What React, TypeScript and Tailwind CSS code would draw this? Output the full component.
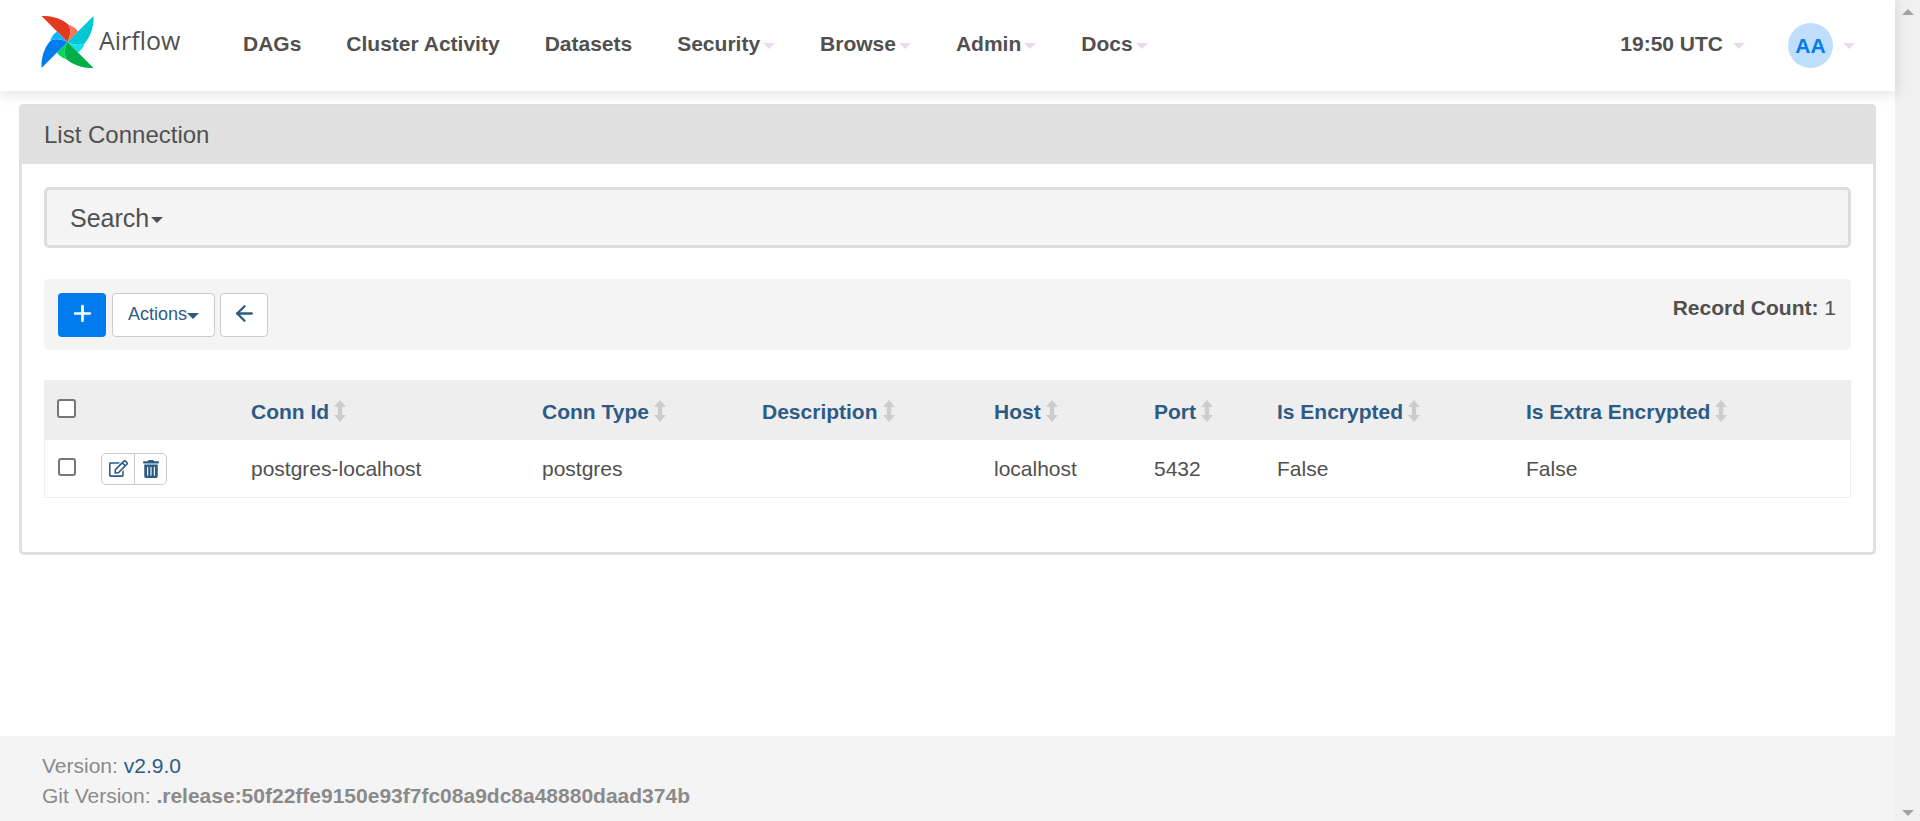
import { ArrowLeft, Plus } from 'lucide-react'
import { FaRegEdit, FaTrashAlt } from 'react-icons/fa'

const navItems = [
  { label: 'DAGs' },
  { label: 'Cluster Activity' },
  { label: 'Datasets' },
  { label: 'Security', caret: true },
  { label: 'Browse', caret: true },
  { label: 'Admin', caret: true },
  { label: 'Docs', caret: true },
]

const columns = [
  { label: 'Conn Id', value: 'postgres-localhost', width: 'w-[291px]' },
  { label: 'Conn Type', value: 'postgres', width: 'w-[220px]' },
  { label: 'Description', value: '', width: 'w-[232px]' },
  { label: 'Host', value: 'localhost', width: 'w-[160px]' },
  { label: 'Port', value: '5432', width: 'w-[123px]' },
  { label: 'Is Encrypted', value: 'False', width: 'w-[249px]' },
  { label: 'Is Extra Encrypted', value: 'False', width: 'flex-1' },
]

const blades = [
  { angle: 0, dark: '#e43921', light: '#ff7557' },
  { angle: 90, dark: '#00c7d4', light: '#11e1ee' },
  { angle: 180, dark: '#00ad46', light: '#04d659' },
  { angle: 270, dark: '#017cee', light: '#0cb6ff' },
]

function Caret({ className }: { className: string }) {
  return <span className={`inline-block border-x-[6px] border-t-[6px] border-x-transparent ${className}`} />
}

function Logo() {
  return (
    <svg width="53" height="52" viewBox="0 0 54 54" className="shrink-0">
      {blades.map((b) => (
        <g key={b.angle} transform={`rotate(${b.angle} 27 27)`}>
          <path d="M0 0C9 -0.5 20 2 28 9C31 14 30 21 27 27Z" fill={b.dark} />
          <path d="M28 9C32 10 36 13 38 16L27 27C30 21 31 14 28 9Z" fill={b.light} />
        </g>
      ))}
    </svg>
  )
}

function SortIcon() {
  return (
    <svg width="12" height="22" viewBox="0 0 12 22" className="ml-[5px] mt-[-3px] shrink-0 text-[#cccccc]">
      <path d="M6 0L12 7H8.2V15H12L6 22L0 15H3.8V7H0Z" fill="currentColor" />
    </svg>
  )
}

export default function App() {
  return (
    <div className="flex h-[821px] overflow-hidden bg-white font-['Liberation_Sans',Arial,sans-serif] text-[#51504f]">
      <div className="flex min-w-0 flex-1 flex-col">
        <header className="relative z-10 flex h-[91px] shrink-0 items-center bg-white shadow-[0_2px_14px_rgba(0,0,0,0.14)]">
          <div className="mb-[8px] ml-[41px] flex w-[202px] shrink-0 items-center">
            <Logo />
            <span className="mb-[2px] ml-[5px] font-['Open_Sans',sans-serif] text-[25px] leading-none">Airflow</span>
          </div>
          <nav className="mb-[4px] flex items-center gap-[45px]">
            {navItems.map((item) => (
              <span key={item.label} className="flex items-center text-[21px] font-bold">
                {item.label}
                {item.caret && <Caret className="ml-[3px] mt-[4px] border-t-[#e8dcec]" />}
              </span>
            ))}
          </nav>
          <div className="ml-auto flex items-center">
            <span className="mb-[4px] text-[21px] font-bold">19:50 UTC</span>
            <Caret className="ml-[10px] border-t-[#e8dcec]" />
            <span className="ml-[43px] flex h-[45px] w-[45px] items-center justify-center rounded-full bg-[#bfdefc] text-[21px] font-bold text-[#017cee]">AA</span>
            <Caret className="ml-[10px] mr-[40px] border-t-[#e8dcec]" />
          </div>
        </header>

        <main className="flex-1 px-[19px] pt-[13px]">
          <section className="rounded-[5px] border-[3px] border-t-0 border-[#e0e0e0] pb-[54px]">
            <div className="-mx-[3px] flex h-[60px] items-center rounded-t-[5px] bg-[#e0e0e0] px-[25px] pt-[2px] text-[24px]">List Connection</div>
            <div className="px-[22px] pt-[23px]">
              <div className="flex h-[61px] items-center rounded-[5px] border-[3px] border-[#dddddd] bg-[#f4f4f4] px-[23px] pt-[2px] text-[25px]">
                Search
                <Caret className="ml-[2px] mt-[3px] border-t-[#51504f]" />
              </div>

              <div className="mt-[31px] flex h-[71px] items-start justify-between rounded-[5px] bg-[#f4f4f4] pl-[14px] pr-[15px] pt-[14px]">
                <div className="flex gap-[5px]">
                  <button className="flex h-[44px] w-[48px] items-center justify-center rounded-[4px] bg-[#017cee] pb-[3px] text-white">
                    <Plus size={25} strokeWidth={2.6} />
                  </button>
                  <button className="ml-px flex h-[44px] w-[103px] items-center justify-center rounded-[4px] border border-[#cccccc] bg-white pb-[2px] text-[18px] text-[#2d5b85]">
                    Actions
                    <Caret className="mt-[3px] border-t-[#2d5b85]" />
                  </button>
                  <button className="flex h-[44px] w-[48px] items-center justify-center rounded-[4px] border border-[#cccccc] bg-white pb-[3px] text-[#2d5b85]">
                    <ArrowLeft size={25} strokeWidth={2.2} />
                  </button>
                </div>
                <p className="mt-[-1px] text-[21px]">
                  <b>Record Count:</b> 1
                </p>
              </div>

              <div className="mt-[30px] border-x border-b border-[#eeeeee]">
                <div className="flex h-[60px] items-center bg-[#eeeeee]">
                  <div className="mt-[-4px] w-[206px] shrink-0 pl-[12px]">
                    <input type="checkbox" className="block h-[19px] w-[19px] appearance-none rounded-[3px] border-2 border-[#767676] bg-white" />
                  </div>
                  {columns.map((col) => (
                    <div key={col.label} className={`${col.width} flex shrink-0 items-center pt-[4px] text-[21px] font-bold text-[#2d5b85]`}>
                      {col.label}
                      <SortIcon />
                    </div>
                  ))}
                </div>
                <div className="flex h-[57px] items-center">
                  <div className="flex w-[206px] shrink-0 items-center pl-[13px]">
                    <input type="checkbox" className="mt-[-4px] block h-[18px] w-[18px] appearance-none rounded-[3px] border-2 border-[#767676] bg-white" />
                    <div className="ml-[25px] flex h-[32px] rounded-[5px] border border-[#cccccc] text-[#2d5b85]">
                      <span className="flex w-[33px] items-center justify-center border-r border-[#cccccc]"><FaRegEdit size={19} /></span>
                      <span className="flex w-[31px] items-center justify-center"><FaTrashAlt size={18} /></span>
                    </div>
                  </div>
                  {columns.map((col) => (
                    <div key={col.label} className={`${col.width} shrink-0 text-[21px]`}>{col.value}</div>
                  ))}
                </div>
              </div>
            </div>
          </section>
        </main>

        <footer className="h-[85px] shrink-0 bg-[#f4f4f4] px-[42px] pt-[15px] text-[21px] leading-[30px] text-[#8a8a8a]">
          <p>Version: <span className="text-[#2d5b85]">v2.9.0</span></p>
          <p>Git Version: <b>.release:50f22ffe9150e93f7fc08a9dc8a48880daad374b</b></p>
        </footer>
      </div>

      <div className="flex w-[25px] shrink-0 flex-col items-center justify-between bg-[#f0f0f0] pb-[5px] pt-[9px]">
        <span className="h-0 w-0 border-x-[6px] border-b-[6px] border-x-transparent border-b-[#a3a3a3]" />
        <span className="h-0 w-0 border-x-[6px] border-t-[6px] border-x-transparent border-t-[#a3a3a3]" />
      </div>
    </div>
  )
}
